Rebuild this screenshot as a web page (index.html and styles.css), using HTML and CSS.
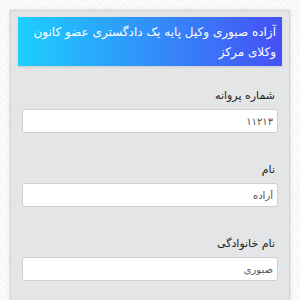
FILE: index.html
```html
<!DOCTYPE html>
<html lang="fa" dir="rtl">
<head>
    <meta charset="UTF-8">
    <meta name="viewport" content="width=device-width, initial-scale=1.0">
    <title>پروفایل وکیل</title>
    <link rel="stylesheet" href="styles.css">
</head>
<body>
    <div class="card">
        <div class="card-header">آزاده صبوری وکیل پایه یک دادگستری عضو کانون وکلای مرکز</div>
        <div class="field">
            <label>شماره پروانه</label>
            <input type="text" value="۱۱۲۱۳" readonly>
        </div>
        <div class="field">
            <label>نام</label>
            <input type="text" value="آزاده" readonly>
        </div>
        <div class="field">
            <label>نام خانوادگی</label>
            <input type="text" value="صبوری" readonly>
        </div>
    </div>
</body>
</html>
```

FILE: styles.css
```css
html,
body {
    height: 300px;
    overflow: hidden;
}

body {
    margin: 0;
    padding: 10px 10px 0;
    box-sizing: border-box;
    font-family: "DejaVu Sans", sans-serif;
    background-color: #fbfbfb;
    background-image: repeating-linear-gradient(45deg, rgba(0, 0, 0, 0.025) 0 1px, transparent 1px 4px);
}

.card {
    box-sizing: border-box;
    height: 290px;
    overflow: hidden;
    background-color: #e4e5e7;
    border: 1px solid #d2d3d5;
    border-bottom: none;
    box-shadow: 0 0 4px rgba(0, 0, 0, 0.15);
    padding: 6px 7px 0;
}

.card-header {
    background: linear-gradient(90deg, #1dcffe, #4650f5);
    color: #fff;
    font-size: 12px;
    line-height: 20px;
    padding: 5px 6px 4px;
    box-shadow: 0 1px 2px rgba(0, 0, 0, 0.12);
    margin-bottom: 23px;
}

.field {
    padding: 0 4px;
    margin-bottom: 30px;
}

.field label {
    display: block;
    font-size: 11px;
    line-height: 14px;
    color: #222;
    padding-right: 3px;
    margin-bottom: 6px;
}

.field input {
    display: block;
    box-sizing: border-box;
    width: 100%;
    height: 24px;
    border: 1px solid #cfd0d2;
    border-radius: 3px;
    background: #fff;
    font-family: "DejaVu Sans", sans-serif;
    font-size: 10px;
    color: #555;
    padding: 0 4px;
    outline: none;
}
```
